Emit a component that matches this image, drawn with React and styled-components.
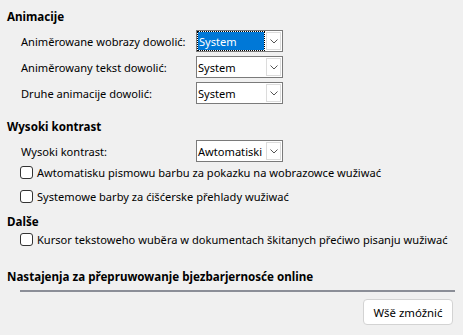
import React from 'react'
import styled, { createGlobalStyle } from 'styled-components'

const GlobalStyle = createGlobalStyle`
  html, body {
    margin: 0;
    padding: 0;
    background: #f0f0f0;
  }
  body {
    font-family: "Noto Sans", "Open Sans", sans-serif;
    font-size: 11.1px;
    color: #000;
  }
`

const Page = styled.div`
  width: 463px;
  height: 335px;
  box-sizing: border-box;
  padding: 9px 10px 0 7px;
  display: flex;
  flex-direction: column;
`

const Heading = styled.div`
  font-weight: 700;
  font-size: 11.6px;
  line-height: 15px;
  height: 15px;
  margin-top: ${props => props.gap || 0}px;
  white-space: nowrap;
`

const Group = styled.div`
  display: flex;
  flex-direction: column;
  gap: ${props => props.gap || 0}px;
  margin-top: ${props => props.top || 0}px;
  padding-left: ${props => props.indent || 14}px;
`

const Row = styled.div`
  display: grid;
  grid-template-columns: 175px 87px;
  align-items: center;
  height: 22px;
`

const Label = styled.span`
  white-space: nowrap;
`

const SelectBox = styled.div`
  height: 22px;
  box-sizing: border-box;
  border: 1px solid #7a7a7a;
  background: #fff;
  display: flex;
  align-items: stretch;
`

const Value = styled.div`
  flex: 1;
  display: flex;
  align-items: center;
  padding-left: 1px;
  margin: ${props => (props.focused ? '1px' : '0')};
  background: ${props => (props.focused ? '#0078d7' : 'transparent')};
  color: ${props => (props.focused ? '#fff' : '#000')};
  outline: ${props => (props.focused ? '1px dotted #000' : 'none')};
  white-space: nowrap;
  overflow: hidden;
`

const ArrowCell = styled.div`
  width: 15px;
  margin: 1px;
  box-sizing: border-box;
  border: 1px solid #dcdcdc;
  display: flex;
  align-items: center;
  justify-content: center;
`

const CheckRow = styled.label`
  display: flex;
  align-items: center;
  gap: 4px;
  height: 20px;
  white-space: nowrap;
`

const Box = styled.span`
  width: 13px;
  height: 13px;
  box-sizing: border-box;
  border: 1px solid #333;
  border-radius: 3px;
  background: #fff;
  flex-shrink: 0;
`

const Separator = styled.div`
  height: 2px;
  background: #8b8e97;
  margin: 6px -2px 0 13px;
`

const Footer = styled.div`
  display: flex;
  justify-content: flex-end;
  margin-top: 7px;
`

const Button = styled.button`
  width: 90px;
  height: 26px;
  background: #fff;
  border: 1px solid #d3d3d3;
  border-radius: 4px;
  font-family: inherit;
  font-size: 11.4px;
  color: #000;
  padding: 0;
`

function Chevron() {
  return (
    <svg width="8" height="5" viewBox="0 0 8 5">
      <path d="M0.5 0.5 L4 4 L7.5 0.5" fill="none" stroke="#555" strokeWidth="1" />
    </svg>
  )
}

function Select({ value, focused }) {
  return (
    <SelectBox>
      <Value focused={focused}>{value}</Value>
      <ArrowCell>
        <Chevron />
      </ArrowCell>
    </SelectBox>
  )
}

function Check({ children }) {
  return (
    <CheckRow>
      <Box />
      <span>{children}</span>
    </CheckRow>
  )
}

export default function App() {
  return (
    <Page>
      <GlobalStyle />
      <Heading>Animacije</Heading>
      <Group top={6} gap={4}>
        <Row>
          <Label>Animěrowane wobrazy dowolić:</Label>
          <Select value="System" focused />
        </Row>
        <Row>
          <Label>Animěrowany tekst dowolić:</Label>
          <Select value="System" />
        </Row>
        <Row>
          <Label>Druhe animacije dowolić:</Label>
          <Select value="System" />
        </Row>
      </Group>

      <Heading gap={15}>Wysoki kontrast</Heading>
      <Group top={6} indent={14}>
        <Row>
          <Label>Wysoki kontrast:</Label>
          <Select value="Awtomatiski" />
        </Row>
      </Group>
      <Group indent={13} gap={4}>
        <Check>Awtomatisku pismowu barbu za pokazku na wobrazowce wužiwać</Check>
        <Check>Systemowe barby za ćišćerske přehlady wužiwać</Check>
      </Group>

      <Heading gap={8}>Dalše</Heading>
      <Group indent={13}>
        <Check>Kursor tekstoweho wuběra w dokumentach škitanych přećiwo pisanju wužiwać</Check>
      </Group>

      <Heading gap={20}>Nastajenja za přepruwowanje bjezbarjernosće online</Heading>
      <Separator />
      <Footer>
        <Button>Wšě zmóžnić</Button>
      </Footer>
    </Page>
  )
}
